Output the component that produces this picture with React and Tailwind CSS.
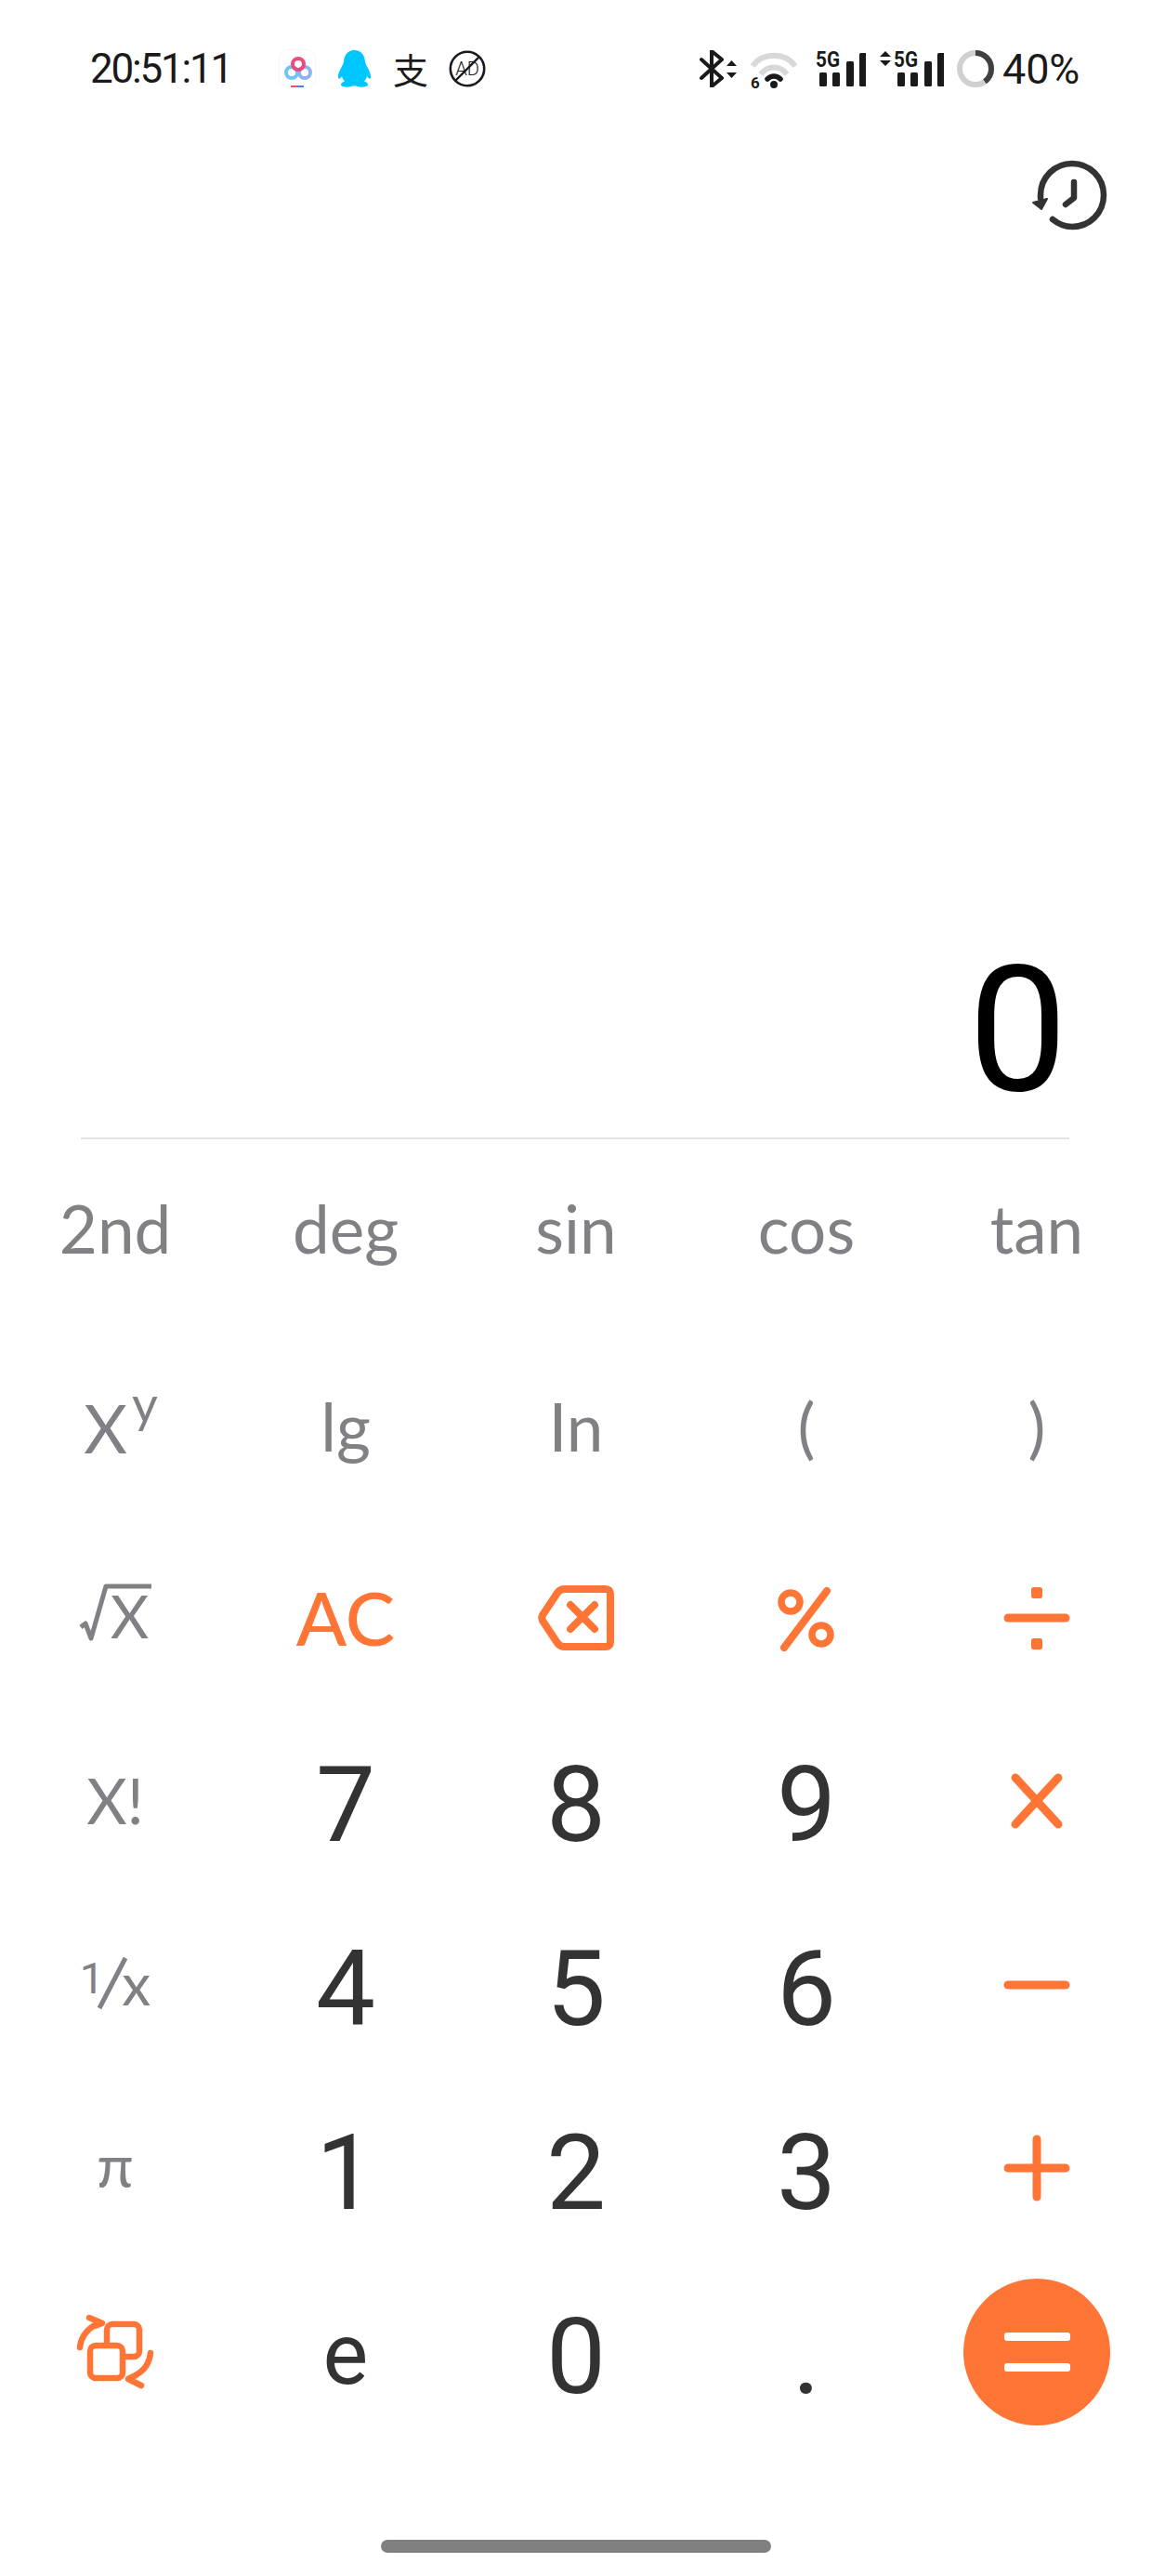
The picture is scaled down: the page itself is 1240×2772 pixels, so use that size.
import React from "react";

const Op = ({ children }) => (
  <svg width="80" height="80" viewBox="0 0 80 80" fill="none" stroke="#ff7536" strokeWidth="9" strokeLinecap="round">
    {children}
  </svg>
);

const Label = ({ children }) => (
  <span className="font-['Lato',sans-serif] text-[71px] leading-none text-[#808085]">{children}</span>
);

const Digit = ({ children }) => (
  <span className="mt-[10px] font-['Roboto',sans-serif] text-[114px] leading-none text-[#333333]">{children}</span>
);

function Signal({ arrows }) {
  const w = arrows ? 69 : 54;
  const x0 = arrows ? 15 : 0;
  return (
    <svg width={w} height="48" viewBox={`0 -4 ${w} 48`}>
      {arrows && <path d="M0 7 L6 1 L12 7Z M0 11 L12 11 L6 17Z" fill="#1a1a1a" />}
      <text x={x0} y="18" fontFamily="Roboto, sans-serif" fontWeight="700" fontSize="23" textLength="26" lengthAdjust="spacingAndGlyphs" fill="#1a1a1a">5G</text>
      <rect x={x0 + 4} y="24" width="8" height="15" rx="1.5" fill="#1a1a1a" />
      <rect x={x0 + 18} y="24" width="8" height="15" rx="1.5" fill="#1a1a1a" />
      <rect x={x0 + 33} y="12" width="8" height="27" rx="1.5" fill="#1a1a1a" />
      <rect x={x0 + 47} y="3" width="8" height="36" rx="1.5" fill="#1a1a1a" />
    </svg>
  );
}

function StatusBar() {
  return (
    <div className="flex h-[148px] shrink-0 items-center pl-[97px] pr-[78px]">
      <span className="w-[203px] font-['Roboto',sans-serif] text-[44px] leading-none tracking-[-2.2px] text-[#1a1a1a]">20:51:11</span>
      <svg width="40" height="42" viewBox="0 0 40 42" fill="none">
        <rect x="0.5" y="0.5" width="39" height="41" rx="9" stroke="#f6f6f6" />
        <circle cx="14" cy="25" r="6" stroke="#6fc6f5" strokeWidth="4" />
        <circle cx="28" cy="25" r="6" stroke="#8cb4f2" strokeWidth="4" />
        <circle cx="21" cy="16" r="6" stroke="#ec4c7c" strokeWidth="4" />
        <rect x="13" y="39" width="7" height="2" fill="#e8506a" />
        <rect x="20" y="39" width="7" height="2" fill="#3f87dd" />
      </svg>
      <svg className="ml-[23px]" width="37" height="40" viewBox="0 0 37 40">
        <path fill="#00c6ff" d="M18.5 0C26 0 29.5 6 30 12C30.2 14 31 15.5 32 17.5C34.5 22 36.5 26 36 29.5C35.7 31.5 34 31 32 28C31.5 30.5 30 32.5 29 33.5C31.5 34.5 33 35.5 33 37C33 39.5 27 40 24 39.5C22 39.2 20.5 38.5 19.5 38.5H17.5C16.5 38.5 15 39.2 13 39.5C10 40 4 39.5 4 37C4 35.5 5.5 34.5 8 33.5C7 32.5 5.5 30.5 5 28C3 31 1.3 31.5 1 29.5C.5 26 2.5 22 5 17.5C6 15.5 6.8 14 7 12C7.5 6 11 0 18.5 0Z" />
      </svg>
      <span className="ml-[23px] w-[40px] font-['Noto_Sans_CJK_SC',sans-serif] text-[38px] leading-[60px] text-[#1a1a1a]">支</span>
      <svg className="ml-[20px]" width="40" height="48" viewBox="0 -4 40 48" fill="none">
        <circle cx="20" cy="20" r="18.2" stroke="#1a1a1a" strokeWidth="2.6" />
        <path d="M33 7L7 33" stroke="#1a1a1a" strokeWidth="2.4" />
        <text x="20" y="27" textAnchor="middle" fontFamily="Roboto, sans-serif" fontWeight="300" fontSize="20" fill="#1a1a1a">AD</text>
      </svg>
      <div className="ml-auto flex items-center">
        <svg width="40" height="40" viewBox="0 0 40 40" fill="none">
          <path d="M2 10L24 30L13 39V1L24 10L2 30" stroke="#1a1a1a" strokeWidth="4" strokeLinejoin="round" strokeLinecap="round" />
          <path d="M29 17L34.5 11L40 17Z M29 24H40L34.5 30Z" fill="#1a1a1a" />
        </svg>
        <svg className="ml-[15px]" width="50" height="44" viewBox="0 -4 50 44" fill="none">
          <path d="M2 15C13 0 37 0 48 15" stroke="#d8d8d8" strokeWidth="6" />
          <path d="M11 24C18 14 32 14 39 24" stroke="#d8d8d8" strokeWidth="6" />
          <path d="M18 29C22 25 28 25 32 29" stroke="#1a1a1a" strokeWidth="5.5" strokeLinecap="round" />
          <circle cx="25" cy="35" r="4" fill="#1a1a1a" />
          <text x="0" y="39" fontFamily="Roboto, sans-serif" fontWeight="700" fontSize="17" fill="#1a1a1a">6</text>
        </svg>
        <div className="ml-[20px]"><Signal /></div>
        <div className="ml-[15px]"><Signal arrows /></div>
        <svg className="ml-[14px]" width="40" height="40" viewBox="0 0 40 40" fill="none">
          <circle cx="20" cy="20" r="17" stroke="#d0d0d0" strokeWidth="6" />
          <circle cx="20" cy="20" r="17" stroke="#404040" strokeWidth="6" pathLength="100" strokeDasharray="40 60" transform="rotate(-90 20 20)" />
        </svg>
        <span className="ml-[9px] font-['Roboto',sans-serif] text-[45px] leading-none tracking-[-0.2px] text-[#1a1a1a]">40%</span>
      </div>
    </div>
  );
}

const cell = "flex items-center justify-center";

export default function App() {
  return (
    <div className="flex h-[2772px] w-[1240px] flex-col bg-white">
      <StatusBar />
      <div className="flex flex-1 flex-col">
        <div className="flex justify-end pr-[38px] pt-[12px]">
          <svg width="100" height="100" viewBox="0 0 100 100" fill="none">
            <path d="M31 76C37 81 44 84 52 84C71 84 86 69 86 50C86 31 71 16 52 16C33 16 18 31 18 50V53" stroke="#333333" strokeWidth="6.5" strokeLinecap="round" />
            <path d="M10 58L25 54L19 65Z" fill="#333333" stroke="#333333" strokeWidth="2" strokeLinejoin="round" />
            <path d="M54 36V53L45 60" stroke="#333333" strokeWidth="6.5" strokeLinecap="round" strokeLinejoin="round" />
          </svg>
        </div>
        <div className="mt-auto flex justify-end pb-[21px] pr-[91px]">
          <span className="font-['Roboto',sans-serif] text-[190px] leading-none text-black">0</span>
        </div>
      </div>
      <div className="ml-[87px] mr-[89px] h-[2px] shrink-0 bg-[#e3e3e3]" />
      <div className="grid shrink-0 grid-cols-5 grid-rows-[208px_206px_198px_198px_198px_198px_198px]">
        <div className={`${cell} pb-[18px]`}><Label>2nd</Label></div>
        <div className={`${cell} pb-[18px]`}><Label>deg</Label></div>
        <div className={`${cell} pb-[18px]`}><Label>sin</Label></div>
        <div className={`${cell} pb-[18px]`}><Label>cos</Label></div>
        <div className={`${cell} pb-[18px]`}><Label>tan</Label></div>

        <div className={`${cell} pb-[2px]`}>
          <div className="flex items-start pl-[12px]">
            <span className="font-['Lato',sans-serif] text-[72px] leading-none text-[#808085]">X</span>
            <span className="ml-[5px] mt-[-16px] font-['Lato',sans-serif] text-[54px] leading-none text-[#808085]">y</span>
          </div>
        </div>
        <div className={`${cell} pb-[6px]`}><Label>lg</Label></div>
        <div className={`${cell} pb-[6px]`}><Label>In</Label></div>
        <div className={`${cell} pb-[6px]`}><Label>(</Label></div>
        <div className={`${cell} pb-[6px]`}><Label>)</Label></div>

        <div className={cell}>
          <div className="relative pr-[3px] pl-[34px]">
            <span className="font-['Lato',sans-serif] text-[64px] leading-none text-[#808085]">X</span>
            <svg className="absolute left-[-2px] top-[-8px]" width="80" height="70" viewBox="0 0 80 70" fill="none" stroke="#808085" strokeWidth="5">
              <path d="M4 52L9 48L15 64L31 8H80" strokeLinejoin="round" />
            </svg>
          </div>
        </div>
        <div className={`${cell} pt-[2px]`}>
          <span className="font-['Lato',sans-serif] text-[80px] font-medium leading-none text-[#ff7536]">AC</span>
        </div>
        <div className={`${cell} pt-[4px]`}>
          <svg width="84" height="70" viewBox="0 0 84 70" fill="none" stroke="#ff7536" strokeWidth="8" strokeLinecap="round" strokeLinejoin="round">
            <path d="M30 4H74C77 4 79 6 79 9V61C79 64 77 66 74 66H30C27 66 24 65 22 62L6 38C5 36 5 34 6 32L22 8C24 5 27 4 30 4Z" />
            <path d="M36 21L62 47M62 21L36 47" />
          </svg>
        </div>
        <div className={`${cell} pt-[4px]`}>
          <svg width="80" height="80" viewBox="0 0 80 80" fill="none" stroke="#ff7536" strokeWidth="7.5" strokeLinecap="round">
            <circle cx="23" cy="23" r="10" />
            <circle cx="56" cy="58" r="10" />
            <path d="M62 11L16 72" strokeWidth="8" />
          </svg>
        </div>
        <div className={`${cell} pt-[4px]`}>
          <Op>
            <path d="M9 40H71" />
            <rect x="34" y="7" width="12" height="12" rx="2.5" fill="#ff7536" stroke="none" />
            <rect x="34" y="62" width="12" height="12" rx="2.5" fill="#ff7536" stroke="none" />
          </Op>
        </div>

        <div className={cell}><span className="font-['Lato',sans-serif] text-[67px] leading-none text-[#808085]">X!</span></div>
        <div className={cell}><Digit>7</Digit></div>
        <div className={cell}><Digit>8</Digit></div>
        <div className={cell}><Digit>9</Digit></div>
        <div className={`${cell} pt-[4px]`}><Op><path d="M17 14L63 64M63 14L17 64" /></Op></div>

        <div className={cell}>
          <div className="flex h-[60px] items-start font-['Lato',sans-serif] leading-none text-[#808085]">
            <span className="font-['Roboto',sans-serif] text-[47px]">1</span>
            <svg className="ml-[-8px]" width="34" height="58" viewBox="0 0 34 58" fill="none" stroke="#808085" strokeWidth="5">
              <path d="M31 2L3 56" />
            </svg>
            <span className="ml-[-7px] self-end text-[62px]">x</span>
          </div>
        </div>
        <div className={cell}><Digit>4</Digit></div>
        <div className={cell}><Digit>5</Digit></div>
        <div className={cell}><Digit>6</Digit></div>
        <div className={`${cell} pt-[2px]`}><Op><path d="M9 40H71" /></Op></div>

        <div className={`${cell} pb-[6px]`}><span className="font-['Lato',sans-serif] text-[64px] leading-none text-[#808085]">π</span></div>
        <div className={cell}><Digit>1</Digit></div>
        <div className={cell}><Digit>2</Digit></div>
        <div className={cell}><Digit>3</Digit></div>
        <div className={cell}><Op><path d="M9 40H71M40 9V71" /></Op></div>

        <div className={cell}>
          <svg width="84" height="84" viewBox="0 0 84 84" fill="none" stroke="#ff7536" strokeWidth="6.5" strokeLinecap="round" strokeLinejoin="round">
            <rect x="33" y="12" width="35" height="35" rx="6" />
            <rect x="15" y="35" width="35" height="35" rx="6" fill="white" />
            <path d="M4 37C5 27 10 19 20 13" />
            <path d="M14 5L28 11L20 14" />
            <path d="M80 43C79 54 73 62 64 67" />
            <path d="M70 78L56 71L64 67" />
          </svg>
        </div>
        <div className={`${cell} pt-[6px]`}><span className="font-['Roboto',sans-serif] text-[92px] leading-none text-[#333333]">e</span></div>
        <div className={cell}><Digit>0</Digit></div>
        <div className={cell}><Digit>.</Digit></div>
        <div className={cell}>
          <div className="flex h-[158px] w-[158px] flex-col items-center justify-center gap-[24px] rounded-full bg-[#ff7536]">
            <div className="h-[9px] w-[71px] rounded-[3px] bg-white" />
            <div className="h-[9px] w-[71px] rounded-[3px] bg-white" />
          </div>
        </div>
      </div>
      <div className="flex h-[142px] shrink-0 justify-center pt-[103px]">
        <div className="h-[14px] w-[420px] rounded-full bg-[#808080]" />
      </div>
    </div>
  );
}
